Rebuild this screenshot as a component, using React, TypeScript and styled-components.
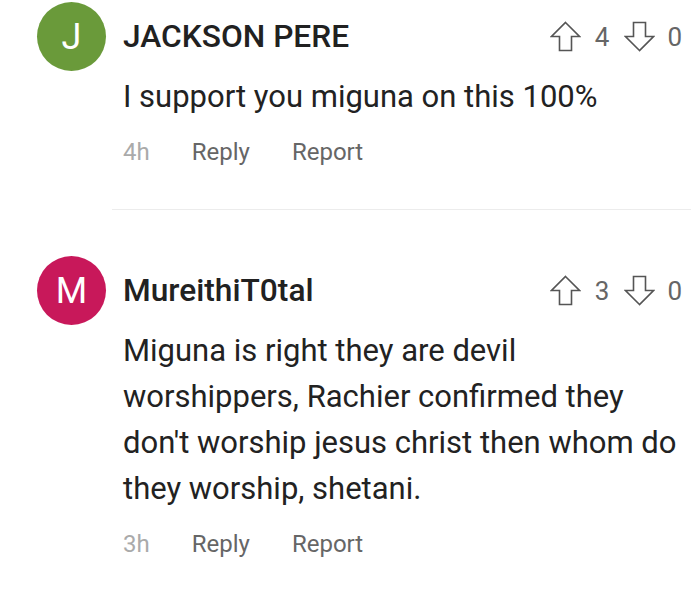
import React from "react";
import styled, { createGlobalStyle } from "styled-components";

const Global = createGlobalStyle`
  html, body { margin: 0; padding: 0; background: #fff; }
  body { font-family: Roboto, "Noto Sans", Arial, sans-serif; }
`;

const Page = styled.div`
  width: 691px;
  padding-top: 2px;
  display: flex;
  flex-direction: column;
`;

const Comment = styled.div`
  display: flex;
  padding: 0 9px 0 37px;
  gap: 17px;
`;

const Avatar = styled.div<{ $bg: string }>`
  flex: 0 0 69px;
  width: 69px;
  height: 69px;
  border-radius: 50%;
  background: ${(p) => p.$bg};
  color: #fff;
  display: flex;
  align-items: center;
  justify-content: center;
  font-size: 36px;
  font-weight: 400;
`;

const Content = styled.div`
  flex: 1;
  display: flex;
  flex-direction: column;
`;

const Header = styled.div`
  height: 69px;
  display: flex;
  align-items: center;
  justify-content: space-between;
`;

const Name = styled.div`
  font-size: 31.7px;
  font-weight: 500;
  color: #212121;
`;

const Votes = styled.div`
  display: flex;
  align-items: center;
  font-size: 26px;
  color: #666;
`;

const Count = styled.span<{ $last?: boolean }>`
  margin: 0 ${(p) => (p.$last ? 0 : 15)}px 0 ${(p) => (p.$last ? 12 : 14)}px;
`;

const Body = styled.div`
  margin-top: 3px;
  font-size: 31px;
  line-height: 46px;
  color: #222;
`;

const Actions = styled.div`
  margin-top: 16px;
  display: flex;
  align-items: center;
  height: 32px;
  font-size: 24px;
  color: #666;
  gap: 42px;
`;

const Time = styled.span`
  color: #aaa;
`;

const Divider = styled.div`
  margin: 41px 0 46px 112px;
  height: 1px;
  background: #ececec;
`;

const Arrow = ({ down }: { down?: boolean }) => (
  <svg width="31" height="31" viewBox="0 0 31 31" style={down ? { transform: "rotate(180deg)" } : undefined}>
    <path
      d="M15.5 1.5 L29.5 15.5 L21.5 15.5 L21.5 29.5 L9.5 29.5 L9.5 15.5 L1.5 15.5 Z"
      fill="none"
      stroke="#555"
      strokeWidth="1.6"
      strokeLinejoin="miter"
    />
  </svg>
);

type C = { letter: string; bg: string; name: string; up: number; down: number; text: React.ReactNode; time: string };

const data: C[] = [
  { letter: "J", bg: "#6a9a3a", name: "JACKSON PERE", up: 4, down: 0, text: "I support you miguna on this 100%", time: "4h" },
  {
    letter: "M",
    bg: "#c8185a",
    name: "MureithiT0tal",
    up: 3,
    down: 0,
    text: (
      <>
        Miguna is right they are devil
        <br />
        worshippers, Rachier confirmed they
        <br />
        don't worship jesus christ then whom do
        <br />
        they worship, shetani.
      </>
    ),
    time: "3h",
  },
];

export default function App() {
  return (
    <Page>
      <Global />
      {data.map((c, i) => (
        <React.Fragment key={i}>
          <Comment>
            <Avatar $bg={c.bg}>{c.letter}</Avatar>
            <Content>
              <Header>
                <Name>{c.name}</Name>
                <Votes>
                  <Arrow />
                  <Count>{c.up}</Count>
                  <Arrow down />
                  <Count $last>{c.down}</Count>
                </Votes>
              </Header>
              <Body>{c.text}</Body>
              <Actions>
                <Time>{c.time}</Time>
                <span>Reply</span>
                <span>Report</span>
              </Actions>
            </Content>
          </Comment>
          {i === 0 && <Divider />}
        </React.Fragment>
      ))}
    </Page>
  );
}
